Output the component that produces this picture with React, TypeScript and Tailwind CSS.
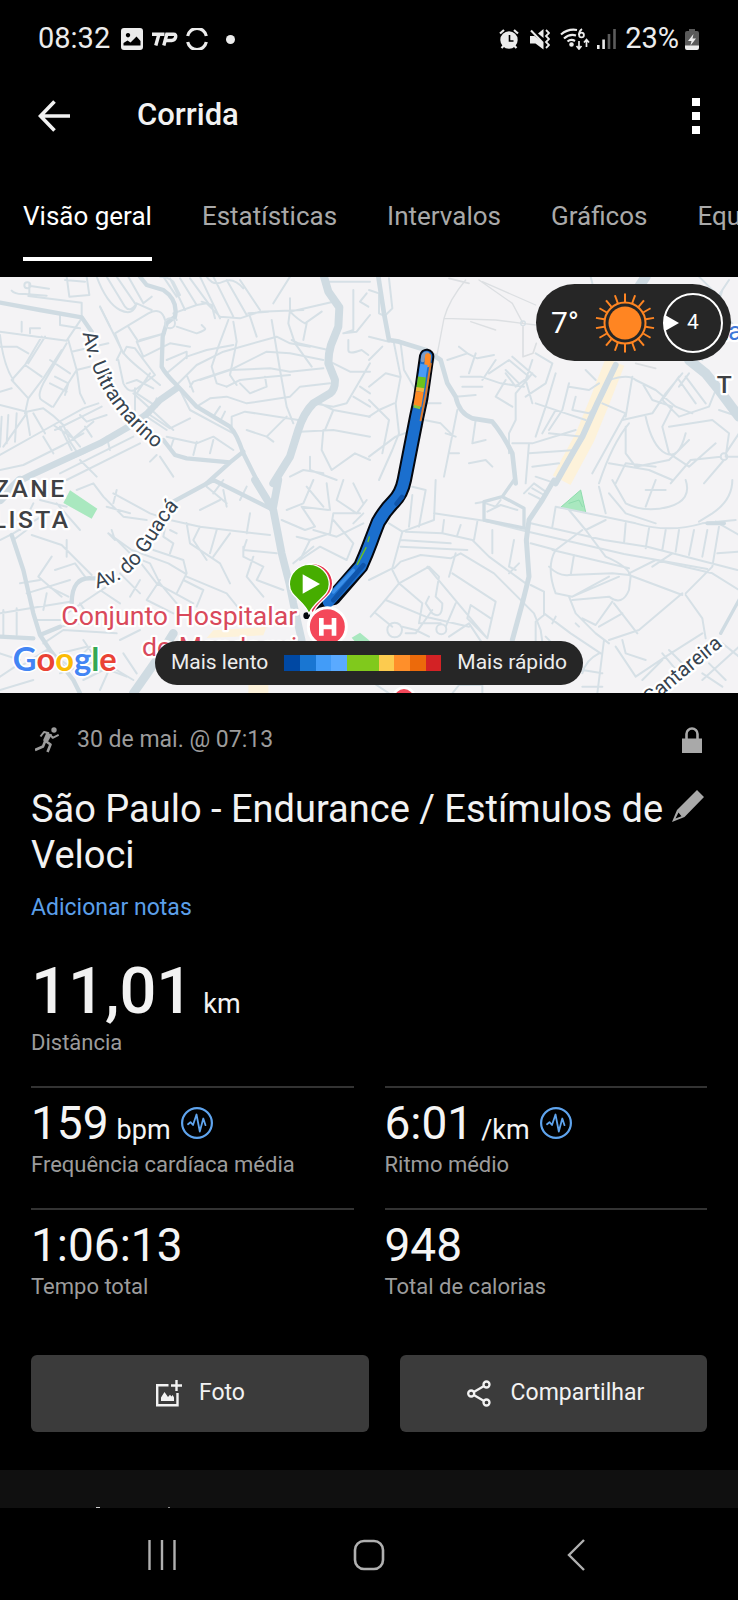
import React from 'react';

const tabs = [
  { label: 'Visão geral', active: true },
  { label: 'Estatísticas', active: false },
  { label: 'Intervalos', active: false },
  { label: 'Gráficos', active: false },
  { label: 'Equipamento', active: false },
];

const stats = [
  { value: '159', unit: 'bpm', label: 'Frequência cardíaca média', pulse: true },
  { value: '6:01', unit: '/km', label: 'Ritmo médio', pulse: true },
  { value: '1:06:13', unit: '', label: 'Tempo total', pulse: false },
  { value: '948', unit: '', label: 'Total de calorias', pulse: false },
];

const paceColors = [
  'bg-[#0048a3]',
  'bg-[#1976d2]',
  'bg-[#429cf8]',
  'bg-[#5aaaff]',
  'bg-[#80c91c]',
  'bg-[#80c91c]',
  'bg-[#fccb4f]',
  'bg-[#ff8f2a]',
  'bg-[#ec6a0b]',
  'bg-[#d32225]',
];

const sunRays = Array.from({ length: 18 }, (_, i) => i * 20);

const StatusBar = () => (
  <div className="flex items-center justify-between h-[78px] pl-[38px] pr-[39px] text-[29px] text-[#ececec]">
    <div className="flex items-center">
      <span>08:32</span>
      <svg className="ml-[11px] w-[22px] h-[22px]" viewBox="0 0 22 22" fill="currentColor">
        <path fillRule="evenodd" d="M3 0h16a3 3 0 0 1 3 3v16a3 3 0 0 1-3 3H3a3 3 0 0 1-3-3V3a3 3 0 0 1 3-3Zm4 5a2.200 2.200 0 1 0 .01 0ZM2.500 17.500h17V13l-4-4.500-6 6-3-2-4 2.500Z" />
      </svg>
      <svg className="ml-2 w-[27px] h-[14px]" viewBox="0 0 27 14" fill="none" stroke="currentColor" strokeWidth="3.400">
        <path d="M1 2.200h12.500M8 2l-3.200 11.500" />
        <path d="M12.800 13.500 15.800 2.200h6.600q3 0 2.200 3t-4 3.300h-5.500" />
      </svg>
      <svg className="ml-2 w-[22px] h-[22px]" viewBox="0 0 22 22" fill="none" stroke="currentColor" strokeWidth="3.200">
        <path d="M1.700 8a9.500 9.500 0 0 1 18.600 0M1.700 14a9.500 9.500 0 0 0 18.600 0" />
      </svg>
      <span className="ml-[18px] size-[9px] rounded-full bg-[#ececec]" />
    </div>

    <div className="flex items-center">
      {/* alarm */}
      <svg className="w-[20px] h-[20px]" viewBox="0 0 20 20" fill="none" stroke="currentColor" strokeWidth="2.200">
        <circle cx="10" cy="11" r="8.700" fill="currentColor" stroke="none" />
        <path d="M1 4.500 5 1M19 4.500 15 1M2.500 19l3-3M17.500 19l-3-3" />
        <path stroke="#000" strokeWidth="1.600" d="M10.500 6v6h4" />
      </svg>
      {/* muted, vibrating */}
      <svg className="ml-[11px] w-[20px] h-[21px]" viewBox="0 0 20 21" fill="currentColor">
        <path d="M0 7h4.500L13.500 14v6.500L5.500 14.500H0ZM8 4.500 13.500 0V9Z" />
        <path d="M1 1.500 13 14" stroke="currentColor" strokeWidth="2" />
        <path d="M16 1l3 3-3 3 3 3-3 3 3 3-3 3" fill="none" stroke="currentColor" strokeWidth="1.800" />
      </svg>
      {/* wifi 6 */}
      <svg className="ml-[10px] w-[30px] h-[22px]" viewBox="0 0 30 22" fill="none" stroke="currentColor" strokeWidth="2.200">
        <path d="M1 6.500Q8 .5 17 2M4 10.500Q9.500 5.500 16 7.500M7.500 13.500q3.500-3 7.500-.5" />
        <circle cx="11.500" cy="16.500" r="1.200" fill="currentColor" />
        <circle cx="21.500" cy="7" r="2.400" strokeWidth="1.800" />
        <path d="M22 1q-3 2-3 6" strokeWidth="1.800" />
        <path d="M19 13v7.500M16.500 18l2.500 3 2.500-3M26.500 19v-7M24 14.500l2.500-3 2.500 3" strokeWidth="1.700" />
      </svg>
      <svg className="ml-[7px] w-[19px] h-[20px]" viewBox="0 0 19 20" fill="currentColor">
        <path d="M0 16h2.600v4H0ZM5.300 10.500h2.600V20H5.300Z" />
        <path fill="#5c5c5c" d="M10.700 5h2.600v15h-2.600ZM16.200 0h2.600v20h-2.600Z" />
      </svg>
      <span className="ml-[9px]">23%</span>
      <svg className="ml-[6px] w-[14px] h-[21px]" viewBox="0 0 14 21">
        <path fill="#5a5a5a" d="M4 0h6v2h2a2 2 0 0 1 2 2v13H0V4a2 2 0 0 1 2-2h2Z" />
        <path fill="#ececec" d="M0 16.500h14V19a2 2 0 0 1-2 2H2a2 2 0 0 1-2-2ZM8.500 5 3 12h3.500L5.500 16.500 11 9.500H7.500Z" />
      </svg>
    </div>
  </div>
);

const Header = () => (
  <header className="flex items-center h-[75px] px-[38px]">
    <button aria-label="Voltar">
      <svg className="w-8 h-8" viewBox="0 0 32 32" fill="none" stroke="#f2f2f2" strokeWidth="3.600">
        <path d="M16.500 1.500 2.500 16l14 14.500M3 16h29" />
      </svg>
    </button>
    <h1 className="ml-[67px] flex-1 text-[31px] font-medium text-[#f2f2f2]">Corrida</h1>
    <button aria-label="Mais opções" className="flex flex-col gap-[6px]">
      <span className="size-2 bg-white" />
      <span className="size-2 bg-white" />
      <span className="size-2 bg-white" />
    </button>
  </header>
);

const Tabs = () => (
  <nav className="flex gap-[50px] pl-[23px] pt-[45px] pb-4 overflow-hidden">
    {tabs.map((tab) => (
      <button
        key={tab.label}
        className={
          tab.active
            ? 'shrink-0 pb-[23px] border-b-4 border-white text-[26px] leading-9 text-white'
            : 'shrink-0 pb-[23px] border-b-4 border-transparent text-[26px] leading-9 text-[#a9a9a9]'
        }
      >
        {tab.label}
      </button>
    ))}
  </nav>
);

// Map tile is drawn in thirds of a pixel and split in four quadrants.
const MapTile = () => (
  <svg
    className="block w-full h-[416px]"
    viewBox="0 0 2214 1248"
    preserveAspectRatio="xMidYMid slice"
    fontFamily="Roboto, sans-serif"
  >
    <rect width="2214" height="1248" fill="#f4f3f5" />

    {/* parks and shopping areas */}
    <path fill="#a9e8bf" d="M210 640 292 695 275 725 190 678ZM1055 1082l25-15 30 25-25 25Z" />
    <path fill="none" stroke="#fdf2da" strokeWidth="60" d="M1845 255 1800 370 1755 480 1685 610" />
    <path fill="#fdf2da" d="M640 1060l160-10-10 25-170 8ZM745 1220h60v30h-60Z" />

    <g fill="none" stroke="#d6e0e6" strokeLinejoin="round" strokeLinecap="round" strokeWidth="6">
      {/* north west */}
      <g transform="translate(0 -21)">
        <path d="M35 62q10 12 40 10l65 5M88 40v35M92 48l55 8M82 46m-9 0a9 9 0 1 0 18 0a9 9 0 1 0-18 0M85 78 245 98v45M200 20l8 60 60-5-8-55M195 30l60 5M290 20q30 80 70 100t50-20l45 20M300 110l30 60M320 20l55 90q15 20 35-10M350 20l55 80M385 20l45 80 25-20" />
        <path d="M300 110Q330 170 365 240q10 20 60 60l55 45M215 245l110-25M0 185l200 27L245 145M180 135v30l60 10M205 210l25 90 10 70 15 30M65 185v-30M90 190v-15h30M0 195q10 90 40 135M125 200 75 285 35 330l50 55-10 45M75 285l50 35M135 200l-50 80M185 240l-55 85-45 60M150 270l60 40M200 220 130 340q-20 40-5 50l30 20M165 320l40 20-10 35M160 410l70-110 60-15M150 340l50 25M0 230h50l35 20" />
        <path d="M0 365 35 355M0 405l80 20 50-10q30 20 60 50l20 50 20 30M80 430l-70 100M5 440 0 530M25 435 20 520M50 430l-5 85M80 435l10 60M100 430l35 60M0 555l160-90 90-50 45-15M160 465l60 40 60-50M165 480l100-50 40-20M240 435l20 20 60-20M0 600l70-15 120-60 60-35M130 500l30 50M180 470l35 70M200 480l40 50M255 470l20 30M130 600l120-50 130-75M180 610 400 500M240 570l50 50M200 630l220-110M320 500l10 40" />
        <path d="M365 240 350 270M345 190l100-60q40-20 50 20M345 190l20 50M385 170l30 45 80-25M410 215l20 45 80-40 60 10M420 210l75-20M370 250l10-20 25 5 60 80-60 45q-20 10-35-20l-15-70M380 340l30-10 50 25M400 370l120 110M405 355v90M450 310l-40 60 60 40M500 270l60-25 0 20M530 170l60 20q30-10 25-15l-10-10" />
        <path d="M530 80 490 20M530 150l-10-20 70-25 30-5 40 40 60 5 60-20 130-5M480 20q25 0 40 15l20 40M555 120 510 25M590 105l-50-80M625 100l-55-75M645 145l-10-40-30-10M660 145 600 20M700 140 640 20M740 135 680 30M780 120l-60-90M620 20q20 30 50 15t60 20M820 100l50-80M745 130l60-5M870 120l-5 40 20 60 50 70M870 125l130-30M870 85v40M870 125q25 25 45 35l50-35M875 210l20 10 90 20M920 160l-10 50M815 150l25 150 20 110 20 50M750 140l20 60M685 150l-30 80-20 60 15 50 30 10M700 155l10 60-20 100 20 30" />
        <path d="M530 345l60-60 80-40 160-45 40 20 60 10M500 310l60-50 60-20 80-15M570 350l10-15 120-40 100-50 70 5 100 20M600 330l90-30 120-5 60 10 100-10M560 315l20 50M680 350l40-20 90-10 60-5M720 340l30 30 50-20-5-30M590 410l40-25 50-5 60 20 130-20 30-30 90-10M540 360l30 60 130 70M640 440l20-30M660 455l15-30M695 470v-30l40-15 160 25M740 480l60 20 60-60M800 500l20 15M900 485l100-5 110 20M970 480l-5 60 30 60 70-50 45 20M500 500l90 20 50-20 60 40M520 510l-10 30M590 515l-10 40M640 510l-10 40M470 385l-20 50 60 40 60-30M440 440l60 40M930 560v40l80 30M870 620l40-20 60 10" />
        <path d="M985 35h125M1060 60v120l-30 10M1100 70l-20 25 25 15M1030 190l40-5 40-50M1045 210v30q0 15 40 0l20 15M990 275l60 30h60M1110 280l-70 120-40 10-60-10M960 400l40 20 110 20M1000 420l-25 60M1080 350l30 20M1060 380l50 30" />
        <path d="M450 575l20-20M480 560l40 60" />
        <g stroke="#cfdbe2" strokeWidth="24">
          <path d="M972 20 985 65 1018 112 1015 170 993 225Q985 250 985 280L1005 330Q1005 360 990 370L940 400Q910 430 895 480L870 560 820 640" />
          <path d="M60 632 100 612 300 520 400 462 440 432 480 390 530 355" strokeWidth="20" />
        </g>
        <g stroke="#cfdbe2" strokeWidth="13">
          <path d="M0 98 120 120 245 142 275 185M490 510 525 555 560 565 690 577 730 545M690 577 620 640" />
          <path d="M420 20 440 45 490 60Q535 90 525 140L500 160 488 200 485 290Q495 310 530 345L590 410 690 470Q710 490 730 550L775 640" />
        </g>
        <circle cx="510" cy="160" r="15" />
      </g>

      {/* north east */}
      <g transform="translate(1107 -21)">
        <path stroke="#dcdfe2" strokeWidth="4" d="M290 30Q240 90 225 145L205 250M225 145 380 150 460 160 500 165M330 30 430 100 462 160M340 35 500 105M305 155 380 180" />
        <circle cx="462" cy="160" r="7" strokeWidth="4" />
        <path stroke="#dcdfe2" strokeWidth="5" d="M462 170v90l30-10 10-30M205 250l-30 60-10 80M800 280l60 15M240 25l60 15" />
        <path d="M60 25l10 90-20 20M0 60l30 10v60l20 10M0 200l60 15M75 220l20 100-15 80 10 90-20 50-40 90M95 220l10 80 35 60M0 270l40-40M0 350l50-40 40 10M0 440l30-20 45-20M0 390l60 60-20 100M0 560l80-60 80-30" />
        <path d="M235 270l60-20 30 15 50-10M295 250l-25-20M320 250l-20 60M275 320l60 0 60 20 70 10M380 270l-40 60M260 380l60-5M280 350l60 0M410 330l-30 50 50 30M360 310l60-40 60 50-40 30-30-40M410 300l40 40M430 260l70 60M490 310l-50 60 0 80-20 40 0 60M500 250l50 30-20 60-60 40M490 270l-20 60 20 70M500 400l90 30 60 20M560 310l-30 100M530 410l-30 90M560 420l-40 70M600 350l60 10 30-20M600 340l-20 80-40 60M620 380l-10 40 50 10 20-20M650 300l30 30" />
        <path d="M165 450l50 10 30 30M265 420l-40 200M230 490l30 10M240 550h30M320 450l-10 70M310 520l40-10M300 580l50-10 20 20M165 400h50M150 470l-30 170M430 520h60l130-40M480 520l-10 120M480 550l140-10M540 490l100 10M490 590l80-10M500 620l60 20" />
        <path d="M700 400l70 30-100 180M720 330q60-20 80 0l60 30 60 50 50 20M790 320l-20 120M760 450l90-20 40-60 50-60M930 320l-50 70 50 50M770 470l0 80 30 40 100-20 60-60M820 340l30 50 60 20-30 60 20 80 60 40 80-70M900 470l130-20 50 40-10 70M1065 560m-10 0a10 10 0 1 0 20 0a10 10 0 1 0-20 0M1065 570l-60 70M1055 560l-90 10-60 70M1075 560h40M1070 550l40-60M830 440q20 90 60 110t60-60M720 580l120 20 70 30M690 640q40-120 90-180M740 640l30-60 90 10M1060 60 1000 270M1080 30l-40 60 70 100M990 20l60 60M930 330l50 70M950 320l60 80M960 310l-30 40M665 20l10 40M1050 420l60 20M930 440l90-30 20-50" />
        <g stroke="#cfdbe2" strokeWidth="14">
          <path d="M28 20 45 130 60 210 90 215 170 240 215 270 235 340 260 380Q270 430 310 445L370 455Q400 490 430 550L440 640" />
          <path d="M740 285 685 400 640 500Q610 550 560 640" strokeWidth="18" />
          <path d="M830 20 810 50M960 270 1010 310 1050 360 1110 440" strokeWidth="30" />
        </g>
      </g>

      {/* south west */}
      <g transform="translate(0 609)">
        <path d="M230 30l50-20 30 40 60 60 70 10M340 40l110 60 60 20M350 30l-10 40M320 80l70 20M100 70l-40 80M120 60l80 20M0 180l40-20 100-60M170 70l70 80M80 150l-40 30M95 165l90 30 90 90M155 230l-40 60 70 60M200 180v50M165 270l60-20 30 40M60 310l60-10M80 340l130-40M0 400l90-15 120-20M10 390v80M50 385v80M145 320l60 30M140 340l-10 50M110 420l80 0M200 400l60-40 60-40M180 440l60-10M240 370l20 30M300 330l60 40" />
        <path d="M325 160l70 50 110 40 50 30M325 160l20 20-10-30M340 170l60 60 50 20 30 60 50 60M400 220l70 90 110 60M460 210l90 30 10 40-30 60M500 120l-10 50 30 20-10 30M510 120l90 20 80 10 130 15M510 150l20 10M560 130l10 60 90 60 30 60M600 140l-20 40 40 60M650 150l-20 70M690 160l-50 70M740 180l-10 30 100 10M730 200l0 30 60 30-20 40 80 30M760 230l-20 60 50 60M550 300l60 30-20 50M560 290l120 50 40 50M480 300l-40 60 80 40M420 300l-30 50M360 280l60 60M640 40l30-40M670 30l10 50M620 20l60 50M750 100l-10 60M720 60l20-40M600 90l60-30" />
        <path d="M860 90l50-20 30-70M845 120l70 30 30-10-40-60 80 10M890 170l40 10-30 60M930 180l60-20 10-60 80 0M940 150l70 20 80-40M1000 120l60 70-20 50M900 240l60-40 80 40M880 250l60-50M1030 0l-20 60 60 40 30-40M980 10l10 80M920 20l50 60M1060 10l30 60M1090 100l-30 30" />
        <path d="M0 590l60-40M60 560l80-50 70 50 60-60M180 520l80-20M180 580l120-40 100 60M250 600l60-30M340 540l-40 90M300 560l80 30M370 520l40 60M250 480l40 60M0 520l60 20M0 630l100-30M360 480l60-30M130 490l60-40 160 10" />
        <g stroke="#cfdbe2" strokeWidth="23">
          <path d="M765 0 820 90 845 220 868 310 880 370 905 480M835 0 820 80" />
          <path d="M0 60 60 0M520 460 470 540 400 640" strokeWidth="26" />
        </g>
        <g stroke="#cfdbe2" strokeWidth="13">
          <path d="M520 65 640 0 810 85M35 165 70 270 100 400 120 465 150 510 220 600 240 640M0 470l100 5M120 465 180 440M215 370q0-80 60-75l40 0" />
        </g>
      </g>

      {/* south east */}
      <g transform="translate(1107 609)">
        <path fill="#a9e8bf" stroke="#8fdcae" strokeWidth="3" d="M575 82 635 30 650 96ZM600 70l30-10 10 20" />
        <path d="M465 40l30-30 35 25-25 50M480 40l40 20M490 25l35 20M355 95l40-20 50 15M350 70l30 10 15-20M320 70l25-5" />
        <path d="M130 20l40 10-20 110M200 0 195 120 100 155 70 265 0 300M130 45l-10 95M60 130l40 25M195 100l150 22 120 30 300 70 250 45M225 120l-5 40M275 135l-10 30M325 125l-10 55M110 155l110 5 90 20 50 50 110 80M95 180l150 10M95 200l200 10M370 150v70M435 180l-15 80 20 10M420 280l30-30M75 265l20-20 60-20 90 10 30-15 100 60 60 60 60 60 20 50 10 70" />
        <path d="M260 220l-20 70M250 280l130 85-25 110-60-60 10-40 60 40M70 270l20 40-50 60-35 40M90 310l90-50 30 30-10 60 20 20q0 50-30 30l-20-30 10-20M50 360l120 50 130 30M90 310l70 60-10 60M175 260l180 215M190 390l-50 70-30 0M100 440l40 10 40 20M260 370l-30 70M240 470l60-40 40 60M20 400l50 40M155 430l60 0" />
        <circle cx="77" cy="450" r="22" />
        <circle cx="217" cy="448" r="15" />
        <path d="M485 130l220 50 130 20 270 70M560 80l-10 60M560 80l240 50q100 30 200 0l100-10M600 90l50 60 60 80q70 30 75 60l-5 40q-20 50-60 20l-110 10M640 150l-80 60q-30 50 0 130l50 10 110-60M650 150l60-30M550 210l230 55M540 260q30 30 60 25l130-5 50 5 160 60M615 225l-10 60M485 190l75 20M690 20l20 80M770 130l-5 60M840 145l-10 60M890 150l-10 60M930 150l-10 65M975 150l-15 75M1015 150l-15 80M720 40l50 60 90 30M730 0l40 70q60 30 130 10t50-80M860 0l-30 80M830 30l60 0M1090 0q0 60-60 100l-40 25M1050 140l-20 120-80 80M780 280l80-40 170 40 80 50M850 260l60-40M1045 220l65-5M1040 125l70 40M485 315l40 20M525 335v70l-25 20v60M525 400l80 60 90 60M600 350l20 50 60 60 40 30M610 350l140-60M730 365l-50 70-40-20M735 370l70 90M690 440l70-40M560 410l-10 20M620 430l10 10M705 480l-20 160M720 480l90-30 130-110M950 345l50 70 10 60M740 500l60 90 90-60 110-70M760 480l10 40 60 20M880 520l50 60M820 600l60-60M900 510l60 60M1000 580l60 40M1000 600l110-100M640 570l60 10M690 520q-40 20-50 60M640 620h60M1060 490l50 40M1020 550l50 50" />
        <path d="M250 640l20-25h70v30M530 470l30 30M0 600l60 40" />
        <g stroke="#cfdbe2">
          <path strokeWidth="15" d="M555 0 520 60 480 120 472 180 480 290 460 370 430 480" />
          <path strokeWidth="10" d="M435 0 400 50 345 65V120L470 145M400 50 465 85V140M1110 360 1055 460" />
          <path strokeWidth="12" d="M1015 130h50" />
        </g>
      </g>
    </g>

    {/* street and district labels */}
    <defs>
      <path id="ultramarino" d="M248 168C275 310 345 425 490 532" />
      <path id="guaca" d="M290 934C380 915 424 855 459 800S510 715 550 675" />
      <path id="cantareira" d="M1950 1286 2185 1092" />
    </defs>
    <g stroke="#ffffff" strokeWidth="14" strokeLinejoin="round" paintOrder="stroke">
      <g fill="#36434f" fontSize="62">
        <text><textPath href="#ultramarino">Av. Ultramarino</textPath></text>
        <text><textPath href="#guaca">Av. do Guacá</textPath></text>
        <text><textPath href="#cantareira">Cantareira</textPath></text>
      </g>
      <g fill="#3f4144" fontSize="74" fontWeight="500" className="tracking-widest">
        <text x="-18" y="659">ZANE</text>
        <text x="-22" y="752">LISTA</text>
        <text x="2150" y="349">T</text>
      </g>
      <text x="2158" y="190" fontSize="80" fill="#3f78d8">ta</text>
      <g fill="#d9495b" fontSize="80">
        <text x="184" y="1044">Conjunto Hospitalar</text>
        <text x="426" y="1137">do Mandaqui</text>
      </g>
    </g>
    <circle cx="1212" cy="1264" r="32" fill="#f4485a" stroke="#ffffff" strokeWidth="8" />

    {/* recorded route */}
    <g fill="none" strokeLinecap="round" strokeLinejoin="round">
      <path stroke="#05080f" strokeWidth="46" d="M1280 238 1262 365 1250 420 1213 609Q1205 650 1180 675T1135 735Q1125 760 1112 795T1082 868L1000 962" />
      <path stroke="#05080f" strokeWidth="30" d="M1005 950 960 1000" />
      <circle cx="920" cy="1016" r="10" fill="#05080f" />
      <path stroke="#1b6fce" strokeWidth="34" d="M1280 238 1262 365 1250 420 1213 609Q1205 650 1180 675T1135 735Q1125 760 1112 795T1082 868L985 975" />
      <path stroke="#7d9cc4" strokeWidth="12" d="M1268 250q0-22 14-20" />
      <path stroke="#ff8a24" strokeWidth="18" d="M1284 238 1282 262" />
      <path stroke="#e07b2c" strokeWidth="6" d="M1292 260 1278 350 1262 430" />
      <path stroke="#4a9bf5" strokeWidth="22" strokeLinecap="butt" d="M1272 262 1266 302" />
      <path stroke="#6cc21d" strokeWidth="24" strokeLinecap="butt" d="M1266 300 1261 334" />
      <path stroke="#f2b63c" strokeWidth="24" strokeLinecap="butt" d="M1261 332 1259 344" />
      <path stroke="#ff8a24" strokeWidth="24" strokeLinecap="butt" d="M1259 344 1252 388" />
      <path stroke="#8cc63a" strokeWidth="20" strokeLinecap="butt" d="M1252 386 1250 394" />
      <path stroke="#0f55ab" strokeWidth="14" d="M1206 660 1190 680M1090 865 1000 970" />
      <path stroke="#3b8fe8" strokeWidth="10" d="M1060 880 1000 945" />
      <path stroke="#6cc21d" strokeWidth="4" d="M1098 812 1072 862M1108 780l-4 14" />
    </g>

    {/* hospital */}
    <circle cx="982" cy="1049" r="57" fill="#f4485a" stroke="#ffffff" strokeWidth="9" />
    <path fill="none" stroke="#ffffff" strokeWidth="14" d="M964 1023v53M1002 1023v53M964 1050h38" />
    {/* finish pin under the start pin */}
    <path fill="#e6304a" stroke="#ffffff" strokeWidth="4" d="M938 1010C920 968 878 960 878 920a60 60 0 0 1 120 0C998 960 955 968 938 1010Z" />
    <path fill="#46ad00" stroke="#ffffff" strokeWidth="4" d="M927 1010C910 968 868 960 868 922a60 60 0 0 1 120 0C988 960 945 968 927 1010Z" />
    <path fill="#ffffff" d="M908 892 960 921 908 950Z" />

    <text x="38" y="1182" fontSize="98" fontWeight="700" fontFamily="Lato, sans-serif" stroke="#ffffff" strokeWidth="10" paintOrder="stroke">
      <tspan fill="#4285f4">G</tspan>
      <tspan fill="#ea4335">o</tspan>
      <tspan fill="#fbbc05">o</tspan>
      <tspan fill="#4285f4">g</tspan>
      <tspan fill="#34a853">l</tspan>
      <tspan fill="#ea4335">e</tspan>
    </text>
  </svg>
);

const Weather = () => (
  <div className="absolute top-[7px] right-[7px] flex items-center h-[77px] pl-[15px] pr-2 rounded-full bg-[#262626] text-white">
    <span className="text-[30px]">7°</span>
    <svg className="ml-4 size-[60px]" viewBox="-30 -30 60 60">
      <circle r="16.500" fill="#ff8522" />
      <circle r="20.500" fill="none" stroke="#ff8522" strokeWidth="2" />
      {sunRays.map((angle) => (
        <path key={angle} d="M0-21v-8.500" stroke="#ff8522" strokeWidth="2" transform={`rotate(${angle})`} />
      ))}
    </svg>
    <div className="relative ml-2 grid place-items-center size-[60px] rounded-full border-2 border-white text-[21px]">
      <svg className="absolute left-0 w-[14px] h-4" viewBox="0 0 14 16">
        <path fill="#ffffff" d="M0 0 14 8 0 16Z" />
      </svg>
      4
    </div>
  </div>
);

const PaceLegend = () => (
  <div className="absolute inset-x-0 bottom-2 flex justify-center">
    <div className="flex items-center gap-4 h-11 px-4 rounded-full bg-[#262626] text-[21px] text-[#ededed]">
      <span>Mais lento</span>
      <div className="flex w-[157px] h-4">
        {paceColors.map((color, idx) => (
          <span key={idx} className={`flex-1 ${color}`} />
        ))}
      </div>
      <span>Mais rápido</span>
    </div>
  </div>
);

const PulseIcon = () => (
  <svg className="ml-0.5 w-8 h-8" viewBox="0 0 32 32" fill="none" stroke="#5fa4ee">
    <circle cx="16" cy="16" r="14.900" strokeWidth="2.200" />
    <path strokeWidth="1.800" strokeLinejoin="round" strokeLinecap="round" d="M7 17.200 9.500 15.200 12 18 15.500 7.500 18.800 24.500 22.300 11.500 24.500 18.200" />
  </svg>
);

const Summary = () => (
  <main className="px-[31px] pt-8 pb-[38px]">
    <div className="flex items-center h-[30px] text-[23px] leading-[30px] text-[#9c9c9c]">
      <svg className="ml-1 w-6 h-[26px]" viewBox="0 0 24 26" fill="none" stroke="currentColor" strokeLinejoin="round">
        <circle cx="19" cy="3" r="2.700" fill="currentColor" stroke="none" />
        <path fill="currentColor" stroke="none" d="M11.500 5.500 17 7.500 13 14.500 9 15.500 8.200 13Z" />
        <path strokeWidth="2" d="M14 6.200 9 5 5.500 9.500M15.500 8l2.200 2.800 6-3" />
        <path strokeWidth="2.600" d="M10.500 14 15.500 17.500 12.500 25M9.800 15 8 19.500 0 23" />
      </svg>
      <span className="ml-[18px] flex-1">30 de mai. @ 07:13</span>
      <svg className="mr-[5px] w-5 h-[26px]" viewBox="0 0 20 26">
        <path fill="#a9a9a9" d="M0 11.500h20V26H0Z" />
        <path fill="none" stroke="#a9a9a9" strokeWidth="2.600" d="M4.500 12V7a5.500 5.500 0 0 1 11 0v5" />
      </svg>
    </div>

    <div className="flex items-start mt-[31px]">
      <h2 className="flex-1 text-[38px] leading-[46px] text-[#f2f2f2]">
        São Paulo - Endurance / Estímulos de Veloci
      </h2>
      <button aria-label="Editar título" className="mt-1 mr-[3px]">
        <svg className="w-8 h-8" viewBox="0 0 32 32" fill="#a9a9a9">
          <path fillRule="evenodd" d="M25 0 32 7 12.500 27 0 32 5 20ZM6.500 22.500 3.500 28.600 9.500 26.200Z" />
        </svg>
      </button>
    </div>

    <a href="#notas" className="block mt-[15px] text-[23px] leading-[30px] text-[#5b9fe9]">
      Adicionar notas
    </a>

    {/* Distance */}
    <div className="mt-9">
      <div className="flex items-baseline gap-[10px] text-[#f2f2f2]">
        <span className="text-[65px] leading-[65px] font-medium">11,01</span>
        <span className="text-[27px] leading-8">km</span>
      </div>
      <div className="mt-1 text-[22px] leading-[30px] text-[#9c9c9c]">Distância</div>
    </div>

    {/* Stats grid */}
    <div className="grid grid-cols-2 gap-x-[31px] gap-y-7 mt-7">
      {stats.map((stat) => (
        <div key={stat.label} className="pt-3 border-t-2 border-[#333333]">
          <div className="flex items-baseline gap-2 h-[46px] text-[#f5f5f5]">
            <span className="text-[46px] leading-[46px]">{stat.value}</span>
            {stat.unit && <span className="text-[27px] leading-8">{stat.unit}</span>}
            {stat.pulse && <PulseIcon />}
          </div>
          <div className="mt-1 text-[22px] leading-[30px] text-[#9c9c9c]">{stat.label}</div>
        </div>
      ))}
    </div>

    {/* Actions */}
    <div className="grid grid-cols-[11fr_10fr] gap-[31px] mt-[53px] text-[23px] text-[#f2f2f2]">
      <button className="flex items-center justify-center gap-[17px] h-[77px] rounded-md bg-[#3b3b3b]">
        <svg className="w-[27px] h-[27px]" viewBox="0 0 27 27" fill="none" stroke="currentColor" strokeWidth="2.400">
          <path d="M13.500 5.200H2.200v20h20.300V13M21.500 0v11M16 5.500h11" />
          <path fill="currentColor" stroke="none" d="M6 21v-3.500L9.500 12l3.500 5 2-2.200 1.500 1.700 1.200-1.500L19 17.500V21Z" />
        </svg>
        Foto
      </button>
      <button className="flex items-center justify-center gap-5 h-[77px] pl-1 rounded-md bg-[#3b3b3b]">
        <svg className="w-6 h-[27px]" viewBox="0 0 24 27" fill="none" stroke="currentColor" strokeWidth="2.300">
          <circle cx="4.200" cy="13.500" r="3" />
          <circle cx="19.500" cy="4.500" r="3" />
          <circle cx="19.500" cy="22.500" r="3" />
          <path d="M6.800 12 17 6M6.800 15 17 21" />
        </svg>
        Compartilhar
      </button>
    </div>
  </main>
);

const SystemNav = () => (
  <div className="grid grid-cols-3 place-items-center h-[93px] px-[58px] text-[#b0b0b0]">
    <button aria-label="Recentes">
      <svg className="w-7 h-8" viewBox="0 0 28 32" stroke="currentColor" strokeWidth="2.400">
        <path d="M1.500 1v30M14 1v30M26.500 1v30" />
      </svg>
    </button>
    <button aria-label="Início">
      <svg className="w-8 h-8" viewBox="0 0 32 32" fill="none" stroke="currentColor" strokeWidth="2.600">
        <rect x="2" y="2" width="28" height="28" rx="9" />
      </svg>
    </button>
    <button aria-label="Voltar ao app anterior">
      <svg className="w-[18px] h-8" viewBox="0 0 18 32" fill="none" stroke="currentColor" strokeWidth="2.400">
        <path d="M17 1 2 16l15 15" />
      </svg>
    </button>
  </div>
);

export default function App() {
  return (
    <div className="min-h-screen flex flex-col bg-black font-['Roboto',sans-serif]">
      <StatusBar />
      <Header />
      <Tabs />
      <div className="relative">
        <MapTile />
        <Weather />
        <PaceLegend />
      </div>
      <Summary />
      {/* divider, with the accents of the next card's title just showing */}
      <div className="flex-1 flex items-end gap-[68px] min-h-[38px] pl-24 bg-[#101010]">
        <span className="w-1 h-px bg-[#d0d0d0]" />
        <span className="w-0.5 h-px bg-[#8a8a8a]" />
      </div>
      <SystemNav />
    </div>
  );
}
